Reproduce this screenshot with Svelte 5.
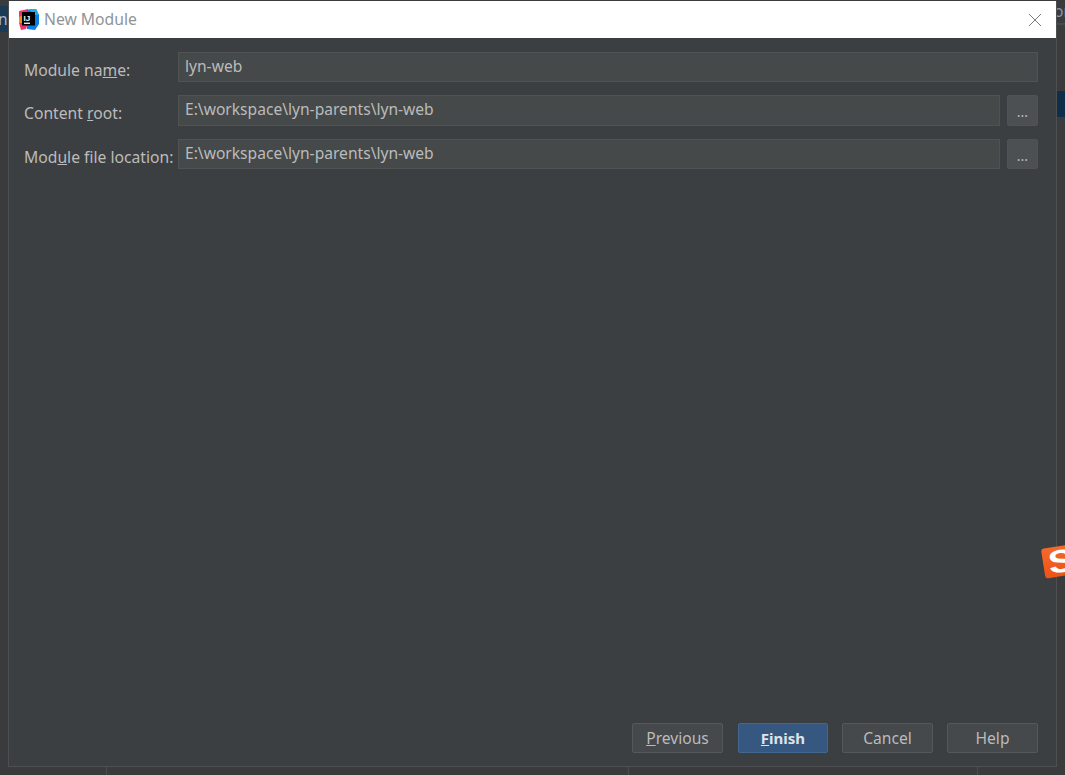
<script>
  const rows = [
    { pre: 'Module na', key: 'm', post: 'e:', value: 'lyn-web', browse: false },
    { pre: 'Content ', key: 'r', post: 'oot:', value: 'E:\\workspace\\lyn-parents\\lyn-web', browse: true },
    { pre: 'Mod', key: 'u', post: 'le file location:', value: 'E:\\workspace\\lyn-parents\\lyn-web', browse: true }
  ];
</script>

<div class="desktop">
  <div class="behind-left"><span>n</span></div>
  <div class="behind-right"><span class="or">or</span><i class="rule"></i><i class="sel"></i></div>
  <i class="tick t1"></i><i class="tick t2"></i><i class="tick t3"></i>

  <section class="dialog">
    <header class="title">
      <svg class="logo" width="20" height="21" viewBox="0 0 20 21">
        <path d="M0 2 L9 0 L12 6 L7 20 L2 21 L0 14 Z" fill="#f0346e" />
        <path d="M0 8 L4 6 L5 14 L0 14 Z" fill="#f98a1c" />
        <path d="M8 1 L17 0 L20 6 L20 15 L16 21 L8 20 Z" fill="#0a7fe6" />
        <path d="M10 0 L17 0 L20 6 L14 6 Z" fill="#22a9ef" />
        <rect x="3" y="3" width="13" height="13.5" fill="#000" />
        <rect x="5" y="13.6" width="6" height="1.3" fill="#fff" />
        <text x="4.6" y="11.5" fill="#fff" font-family="Liberation Sans" font-weight="700" font-size="8">IJ</text>
      </svg>
      <span class="name">New Module</span>
      <svg class="close" width="14" height="14" viewBox="0 0 14 14">
        <path d="M1 1 L13 13 M13 1 L1 13" stroke="#7a7a7a" stroke-width="1" fill="none" />
      </svg>
    </header>

    <div class="form">
      {#each rows as row}
        <div class="row">
          <span class="label">{row.pre}<u>{row.key}</u>{row.post}</span>
          <div class="field">{row.value}</div>
          {#if row.browse}
            <button class="dots">...</button>
          {/if}
        </div>
      {/each}
    </div>

    <footer class="actions">
      <button class="btn first"><u>P</u>revious</button>
      <button class="btn primary"><u>F</u>inish</button>
      <button class="btn">Cancel</button>
      <button class="btn">Help</button>
    </footer>
  </section>

  <div class="sogou"><span>S</span></div>
</div>

<style>
  :global(body) {
    margin: 0;
    background: #3a3d3f;
  }
  .desktop {
    position: relative;
    width: 1065px;
    height: 775px;
    overflow: hidden;
    box-sizing: border-box;
    padding: 1px 8px 8px 8px;
    background: #393b3d;
    font-family: "Noto Sans", "Open Sans", sans-serif;
  }
  .behind-left {
    position: absolute;
    left: 0;
    top: 6px;
    width: 8px;
    height: 26px;
    background: #1b3a55;
    color: #a9b7c6;
    font-size: 15.6px;
    line-height: 26px;
    overflow: hidden;
  }
  .behind-left span {
    margin-left: -2px;
    display: block;
  }
  .behind-right {
    position: absolute;
    left: 1057px;
    top: 0;
    width: 8px;
    height: 120px;
    overflow: hidden;
  }
  .or {
    display: block;
    margin-left: -3px;
    color: #8c96a0;
    font-size: 15.6px;
    line-height: 22px;
    white-space: nowrap;
  }
  .rule {
    position: absolute;
    left: 0;
    right: 0;
    top: 23px;
    height: 2px;
    background: #47494b;
  }
  .sel {
    position: absolute;
    left: 0;
    right: 0;
    top: 91px;
    height: 26px;
    background: #0d2f4a;
  }
  .tick {
    position: absolute;
    top: 767px;
    width: 1px;
    height: 8px;
    background: #4a4c4e;
  }
  .t1 { left: 106px; }
  .t2 { left: 628px; }
  .t3 { left: 977px; }
  .dialog {
    box-sizing: border-box;
    width: 1049px;
    height: 766px;
    display: flex;
    flex-direction: column;
    background: #3c3f41;
    border: 1px solid #4d4f51;
    border-top: 0;
    position: relative;
  }
  .title {
    height: 37px;
    flex: none;
    display: flex;
    align-items: center;
    background: #fff;
    padding: 0 14px 0 10px;
    color: #8f9499;
    font-size: 15.7px;
  }
  .logo {
    margin-right: 5px;
  }
  .name {
    flex: 1;
    margin-top: -2px;
  }
  .form {
    flex: 1;
    padding: 14px 18px 0 15px;
    display: flex;
    flex-direction: column;
    gap: 13px;
  }
  .row {
    display: flex;
    align-items: stretch;
    height: 30px;
  }
  .row:nth-child(2) {
    height: 31px;
  }
  .label {
    width: 154px;
    flex: none;
    color: #bbbbbb;
    font-size: 15.7px;
    line-height: 20px;
    padding-top: 8px;
    white-space: nowrap;
  }
  .field {
    flex: 1;
    box-sizing: border-box;
    background: #45494a;
    border: 1px solid #505354;
    color: #bbbbbb;
    font-size: 15.6px;
    line-height: 27px;
    padding-left: 6px;
  }
  .dots {
    flex: none;
    width: 31px;
    margin-left: 7px;
    box-sizing: border-box;
    background: #4c5052;
    border: 1px solid #505354;
    border-radius: 2px;
    color: #bbbbbb;
    font: 14px "Noto Sans", sans-serif;
    padding: 2px 0 0;
  }
  .actions {
    flex: none;
    display: flex;
    justify-content: flex-end;
    gap: 14px;
    padding: 0 18px 13px 0;
  }
  .btn {
    width: 91px;
    height: 30px;
    box-sizing: border-box;
    background: #45494b;
    border: 1px solid #55585a;
    border-radius: 2px;
    color: #bbbbbb;
    font: 15.6px "Noto Sans", sans-serif;
    padding: 0;
  }
  .first {
    margin-right: 1px;
  }
  .primary {
    width: 90px;
    background: #365880;
    border-color: #43688f;
    color: #dfe3e8;
    font-size: 15px;
    font-weight: 700;
  }
  .sogou {
    position: absolute;
    left: 1043px;
    top: 546px;
    width: 36px;
    height: 30px;
    background: linear-gradient(#f4692a, #ee5216);
    border-radius: 3px;
    transform: rotate(-9deg);
    overflow: hidden;
  }
  .sogou span {
    display: block;
    color: #fff;
    font: 700 32px/30px "Liberation Sans", sans-serif;
    padding-left: 4px;
    transform: scaleX(1.25);
    transform-origin: left center;
  }
</style>
